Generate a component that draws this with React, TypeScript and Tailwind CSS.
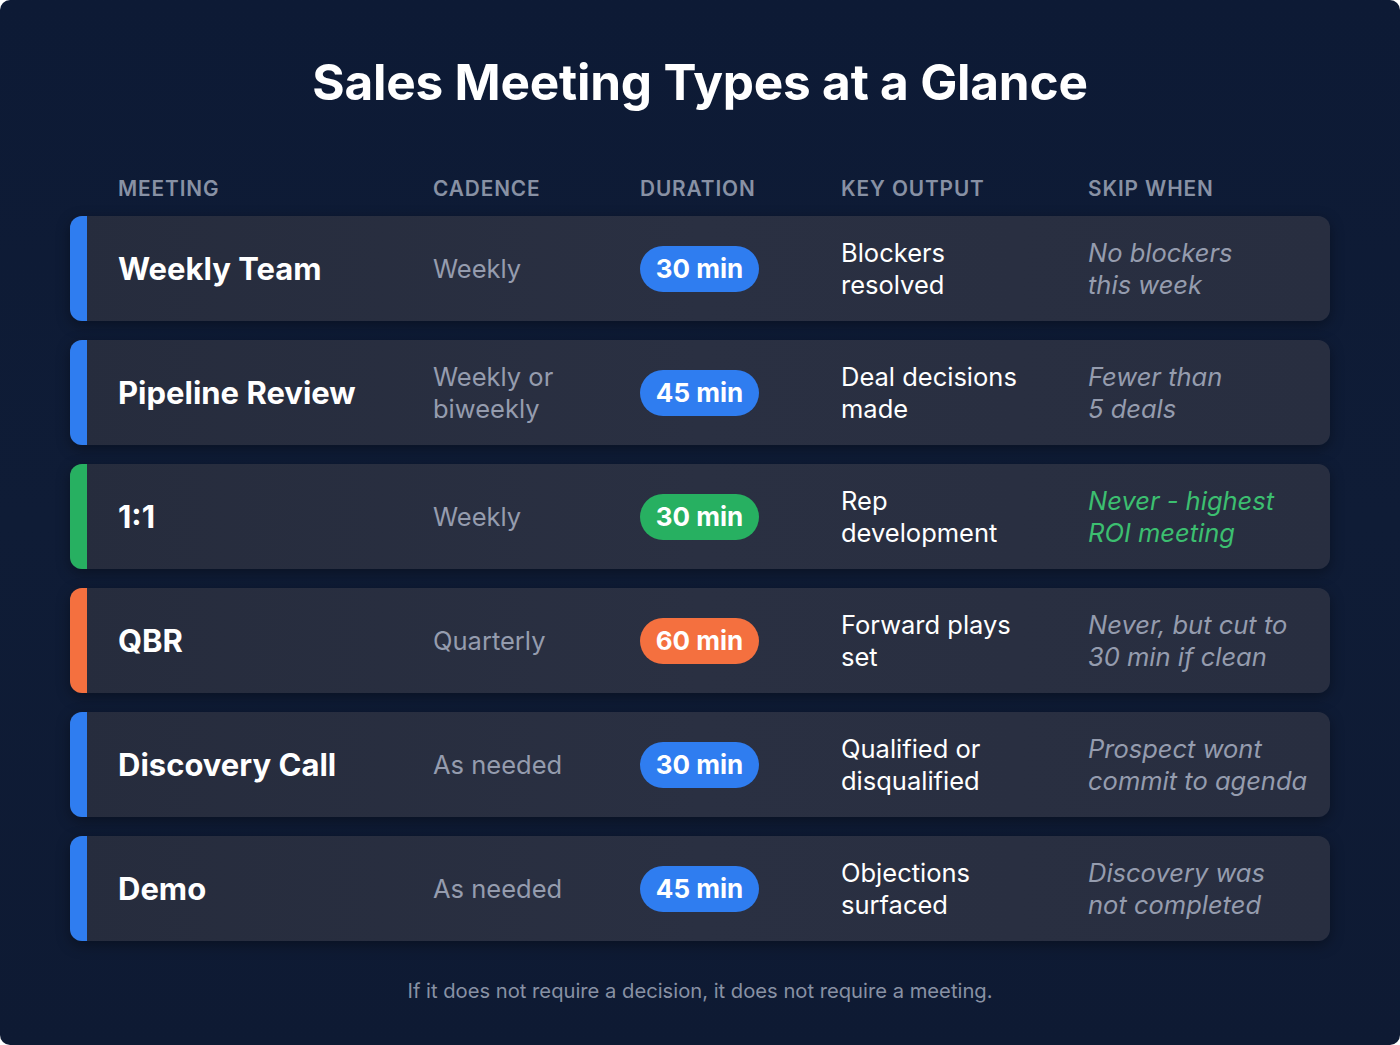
import React from 'react';

type Tone = 'blue' | 'green' | 'orange';

const bars: Record<Tone, string> = {
    blue: 'bg-[#2f7df0]',
    green: 'bg-[#27b061]',
    orange: 'bg-[#f4703f]',
};

const rows: { name: string; cadence: string; duration: string; output: string; skip: string; tone: Tone }[] = [
    { name: 'Weekly Team', cadence: 'Weekly', duration: '30 min', output: 'Blockers\nresolved', skip: 'No blockers\nthis week', tone: 'blue' },
    { name: 'Pipeline Review', cadence: 'Weekly or\nbiweekly', duration: '45 min', output: 'Deal decisions\nmade', skip: 'Fewer than\n5 deals', tone: 'blue' },
    { name: '1:1', cadence: 'Weekly', duration: '30 min', output: 'Rep\ndevelopment', skip: 'Never - highest\nROI meeting', tone: 'green' },
    { name: 'QBR', cadence: 'Quarterly', duration: '60 min', output: 'Forward plays\nset', skip: 'Never, but cut to\n30 min if clean', tone: 'orange' },
    { name: 'Discovery Call', cadence: 'As needed', duration: '30 min', output: 'Qualified or\ndisqualified', skip: 'Prospect wont\ncommit to agenda', tone: 'blue' },
    { name: 'Demo', cadence: 'As needed', duration: '45 min', output: 'Objections\nsurfaced', skip: 'Discovery was\nnot completed', tone: 'blue' },
];

const cols = 'grid grid-cols-[315px_207px_201px_247px_1fr] items-center';

const App = () => {
    return (
        <div className="bg-white w-[1400px] h-[1045px]" style={{ fontFamily: 'Inter, "Noto Sans", sans-serif' }}>
            <div className="w-full h-full rounded-[10px] bg-gradient-to-b from-[#0d1a35] via-[#0f1c36] to-[#0e1a33] px-[70px] pt-[54px] flex flex-col">
                <h1 className="text-center text-white text-[49.5px] font-bold leading-[56px] tracking-[-0.2px]">
                    Sales Meeting Types at a Glance
                </h1>

                {/* column headings */}
                <div className={`${cols} pl-[48px] mt-[67px] text-[20.8px] font-semibold tracking-[0.9px] text-[#8891a4] uppercase leading-6`}>
                    <span>Meeting</span>
                    <span>Cadence</span>
                    <span>Duration</span>
                    <span>Key Output</span>
                    <span>Skip When</span>
                </div>

                <div className="mt-[15px] flex flex-col gap-[19px]">
                    {rows.map((r) => (
                        <div
                            key={r.name}
                            className="relative h-[105px] rounded-[12px] overflow-hidden bg-gradient-to-r from-[#262c3d] via-[#2a3042] to-[#282e40] shadow-[0_4px_14px_rgba(0,0,0,0.35)]"
                        >
                            <div className={`absolute left-0 top-0 bottom-0 w-[17px] ${bars[r.tone]}`} />
                            <div className={`${cols} h-full pl-[48px]`}>
                                <span className="text-white text-[31px] font-bold leading-9">{r.name}</span>
                                <span className="text-[#959cae] text-[25.5px] leading-[32px] whitespace-pre-line">{r.cadence}</span>
                                <span>
                                    <span
                                        className={`inline-flex items-center justify-center w-[119px] h-[46px] rounded-full text-white text-[26px] font-bold ${bars[r.tone]}`}
                                    >
                                        {r.duration}
                                    </span>
                                </span>
                                <span className="text-white text-[25.5px] leading-[32px] whitespace-pre-line">{r.output}</span>
                                <span
                                    className={`text-[25.5px] leading-[32px] italic whitespace-pre-line ${
                                        r.tone === 'green' ? 'text-[#3cbf70]' : 'text-[#959cae]'
                                    }`}
                                >
                                    {r.skip}
                                </span>
                            </div>
                        </div>
                    ))}
                </div>

                <p className="mt-[38px] text-center text-[20.2px] text-[#8891a4] leading-6">
                    If it does not require a decision, it does not require a meeting.
                </p>
            </div>
        </div>
    );
};

export default App;
